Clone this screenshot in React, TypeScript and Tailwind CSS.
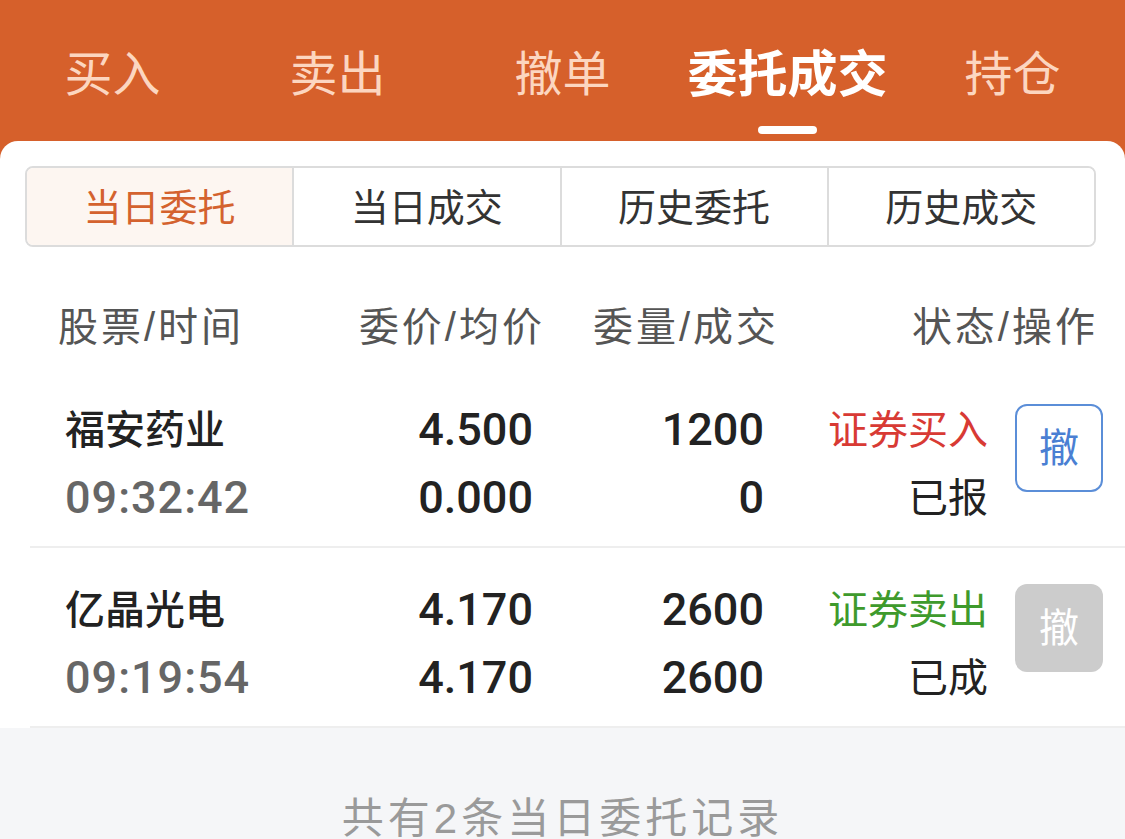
import React from "react";

const FONT = { fontFamily: '"Liberation Sans", "Noto Sans CJK SC", sans-serif' };
const NUM = { fontFamily: 'Roboto, "Liberation Sans", sans-serif' };

const tabs = ["买入", "卖出", "撤单", "委托成交", "持仓"];
const segs = ["当日委托", "当日成交", "历史委托", "历史成交"];

type Row = {
  name: string;
  time: string;
  p1: string;
  p2: string;
  q1: string;
  q2: string;
  op: string;
  opColor: string;
  status: string;
  active: boolean;
};

const rows: Row[] = [
  { name: "福安药业", time: "09:32:42", p1: "4.500", p2: "0.000", q1: "1200", q2: "0", op: "证券买入", opColor: "text-[#d83a34]", status: "已报", active: true },
  { name: "亿晶光电", time: "09:19:54", p1: "4.170", p2: "4.170", q1: "2600", q2: "2600", op: "证券卖出", opColor: "text-[#3e9a2c]", status: "已成", active: false },
];

export default function App() {
  return (
    <div className="w-[1125px] h-[839px] overflow-hidden bg-[#f5f6f8]" style={FONT}>
      <div className="bg-[#d6602b]">
        <div className="h-[141px] grid grid-cols-5">
          {tabs.map((t, i) => {
            const sel = i === 3;
            return (
              <div key={t} className="flex flex-col items-center pt-[51px]">
                <div
                  className={
                    sel
                      ? "text-[50px] leading-[48px] font-bold text-white"
                      : "text-[48px] leading-[48px] text-[#fcd6c0]"
                  }
                >
                  {t}
                </div>
                {sel && <div className="mt-[27px] h-[8px] w-[59px] rounded-full bg-white" />}
              </div>
            );
          })}
        </div>
        <div className="bg-white rounded-t-[18px] pt-[25px]">
          <div className="ml-[25px] mr-[29px] h-[81px] flex rounded-[8px] border-2 border-[#dcdcdc] overflow-hidden">
            {segs.map((s, i) => (
              <div
                key={s}
                className={
                  "flex-1 flex items-center justify-center pt-[3px] text-[38px] " +
                  (i === 0 ? "bg-[#fdf6f1] text-[#d4622e]" : "bg-white text-[#333333] border-l-2 border-[#dcdcdc]")
                }
              >
                {s}
              </div>
            ))}
          </div>

          <div className="h-[121px] pt-[40px] flex items-center pl-[58px] pr-[27px] text-[40px] leading-[81px] text-[#555555] tracking-[3px] whitespace-nowrap">
            <div className="w-[250px]">股票/时间</div>
            <div className="w-[237px] text-right">委价/均价</div>
            <div className="ml-[48px] w-[210px]">委量/成交</div>
            <div className="flex-1 text-right">状态/操作</div>
          </div>

          {rows.map((r) => (
            <div key={r.name} className="ml-[30px] h-[180px] border-b-2 border-[#eeeeee] flex pl-[35px] pt-[36px]">
              <div className="w-[230px] pt-[2px] flex flex-col gap-[20px]">
                <div className="text-[40px] leading-[48px] text-[#222222] font-medium">{r.name}</div>
                <div className="text-[45px] leading-[48px] text-[#666666] font-medium tracking-[1px]" style={NUM}>{r.time}</div>
              </div>
              <div className="w-[238px] pt-[2px] flex flex-col gap-[20px] text-right text-[45px] leading-[48px] text-[#222222] font-medium" style={NUM}>
                <div>{r.p1}</div>
                <div>{r.p2}</div>
              </div>
              <div className="w-[231px] pt-[2px] flex flex-col gap-[20px] text-right text-[45px] leading-[48px] text-[#222222] font-medium" style={NUM}>
                <div>{r.q1}</div>
                <div>{r.q2}</div>
              </div>
              <div className="w-[224px] pt-[2px] flex flex-col gap-[20px] text-right text-[40px] leading-[48px]">
                <div className={r.opColor}>{r.op}</div>
                <div className="text-[#222222]">{r.status}</div>
              </div>
              <div className="ml-[27px]">
                <div
                  className={
                    "w-[88px] h-[88px] rounded-[12px] flex items-center justify-center text-[40px] " +
                    (r.active
                      ? "border-2 border-[#5b8ed8] text-[#4a7fd3] bg-white"
                      : "bg-[#cccccc] text-white")
                  }
                >
                  撤
                </div>
              </div>
            </div>
          ))}
        </div>
      </div>
      <div className="pt-[67px] text-center text-[42px] leading-[48px] text-[#9a9a9a] tracking-[4px]">
        共有2条当日委托记录
      </div>
    </div>
  );
}
